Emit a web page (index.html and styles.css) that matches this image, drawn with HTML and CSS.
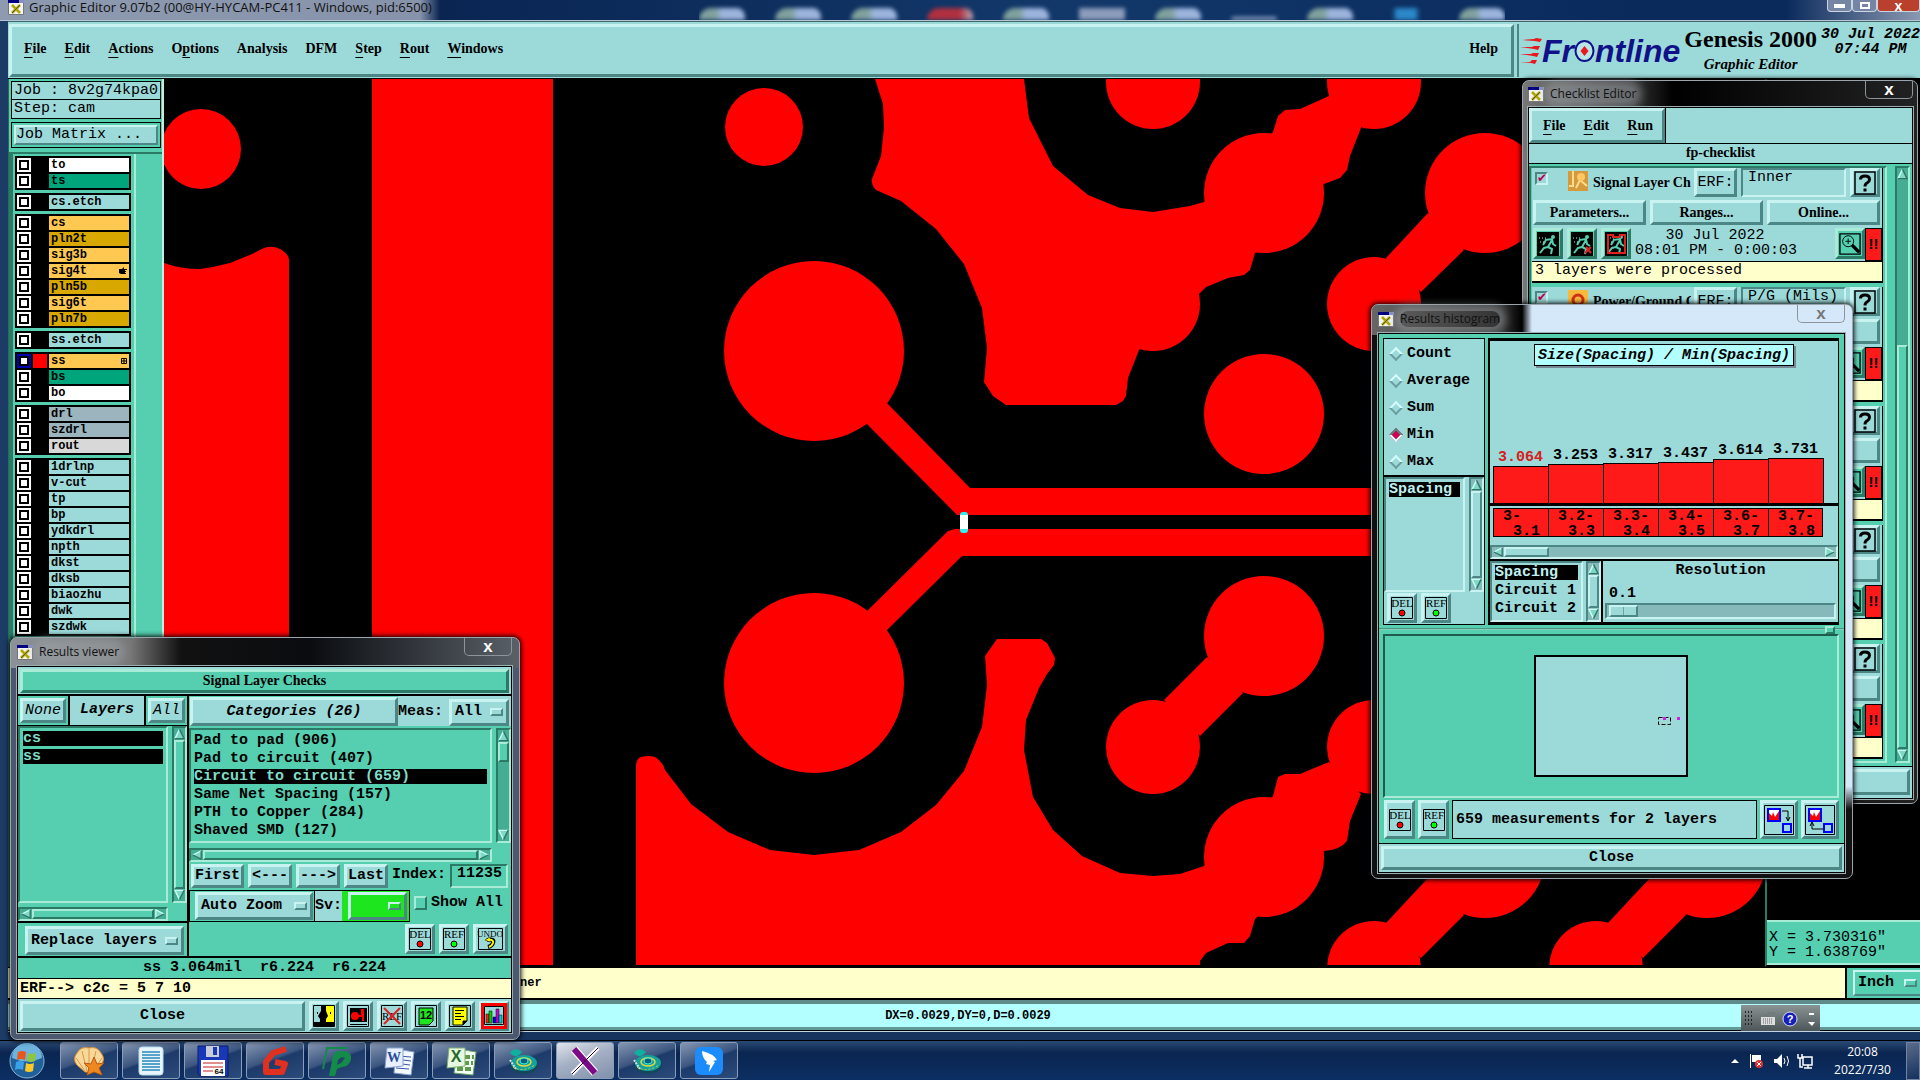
FILE: index.html
```html
<!DOCTYPE html>
<html lang="en">
<head>
    <meta charset="utf-8">
    <title>Graphic Editor</title>
    <link rel="stylesheet" href="styles.css">
</head>
<body>
<!-- shared icons -->
<svg class="defs" width="0" height="0">
    <symbol id="xwin" viewBox="0 0 16 15"><path fill="#f4f4f4" stroke="#777" d="M.5.5h15v14H.5z"/><path fill="#000080" d="M0 0h11v3H0z"/><path fill="#8890c0" d="M11 0h5v3h-5z"/><path stroke="#b0a800" stroke-width="2.5" d="M4 5l8 8M12 5l-8 8"/><path stroke="#5a5a20" d="M12 5l-8 8"/></symbol>
    <symbol id="up" viewBox="0 0 12 12"><path fill="#7fd8c6" d="M6 1l5 10H1z"/><path fill="none" stroke="#c9fff4" stroke-width="1.5" d="M6 1L1 11"/><path fill="none" stroke="#2f7466" stroke-width="1.5" d="M6 1l5 10H1"/></symbol>
    <symbol id="down" viewBox="0 0 12 12"><path fill="#7fd8c6" d="M6 11L1 1h10z"/><path fill="none" stroke="#c9fff4" stroke-width="1.5" d="M6 11L1 1h10"/><path fill="none" stroke="#2f7466" stroke-width="1.5" d="M11 1L6 11"/></symbol>
    <symbol id="left" viewBox="0 0 12 12"><path fill="#7fd8c6" d="M1 6l10-5v10z"/><path fill="none" stroke="#c9fff4" stroke-width="1.5" d="M1 6l10-5"/><path fill="none" stroke="#2f7466" stroke-width="1.5" d="M11 1v10L1 6"/></symbol>
    <symbol id="right" viewBox="0 0 12 12"><path fill="#7fd8c6" d="M11 6L1 1v10z"/><path fill="none" stroke="#c9fff4" stroke-width="1.5" d="M11 6L1 1v10"/><path fill="none" stroke="#2f7466" stroke-width="1.5" d="M1 11l10-5"/></symbol>
    <symbol id="del" viewBox="0 0 24 24"><path fill="none" stroke="#000" d="M1.500 1.500h21v21h-21z"/><text x="12" y="11" class="icon-text">DEL</text><circle cx="12" cy="17" r="3" fill="#f00" stroke="#000"/></symbol>
    <symbol id="ref" viewBox="0 0 24 24"><path fill="none" stroke="#000" d="M1.500 1.500h21v21h-21z"/><text x="12" y="11" class="icon-text">REF</text><circle cx="12" cy="17" r="3" fill="#0f0" stroke="#000"/></symbol>
    <symbol id="help" viewBox="0 0 22 24"><path fill="none" stroke="#000" stroke-width="1.500" d="M1 1h20v22H1z"/><path fill="none" stroke="#000" stroke-width="3" d="M6.500 8.500q0-3.500 4.500-3.500t4.500 3.500q0 2-2.500 3.500-2 1-2 3.500"/><path d="M9.500 17.500h3v3h-3z"/></symbol>
    <symbol id="run" viewBox="0 0 22 24"><path d="M0 0h22v24H0z"/><path fill="none" stroke="#55cfb0" stroke-width="2" d="M15 8l-4 7-4 1-4 5M11 15l4 2-1 5M8 8l7-1 1 5 3 2M9 8l-3 5"/><circle cx="16" cy="5" r="2" fill="#55cfb0"/><path stroke="#9ff" stroke-dasharray="1 2" d="M2 6h8M3 10h4"/></symbol>
    <symbol id="zoomin" viewBox="0 0 24 24"><path fill="#55cfb0" stroke="#000" stroke-width="1.500" d="M1 1h22v22H1z"/><circle cx="10" cy="9" r="6" fill="none" stroke="#000"/><path stroke="#000" d="M10 6v6M7 9h6"/><path stroke="#000" stroke-width="3.500" d="M14 13l8 8"/></symbol>
    <symbol id="cam" viewBox="0 0 32 30"><ellipse cx="17" cy="19" rx="14" ry="9" fill="#13475a"/><ellipse cx="17" cy="17" rx="13" ry="8" fill="#12a19b"/><ellipse cx="17" cy="16" rx="7" ry="4" fill="none" stroke="#e6d840" stroke-width="1.500"/><ellipse cx="17" cy="15" rx="4" ry="3" fill="#0b5b7c" stroke="#40f0e0"/><path fill="#10b0a0" d="M3 7q5-7 12-1l-3 3q-5 3-9-2z"/><path stroke="#ddd" stroke-width="2" stroke-dasharray="2 1" d="M3 14l6 9"/><path stroke="#d8d048" stroke-dasharray="2 2" d="M6 21q9 6 22-2" fill="none"/></symbol>
</svg>

<div class="screen">
    <header class="titlebar">
        <svg class="xicon"><use href="#xwin"/></svg>
        <span class="glow">Graphic Editor 9.07b2 (00@HY-HYCAM-PC411 - Windows, pid:6500)</span>
        <div class="desk"><i></i><i></i><i></i><i class="pdf"></i><i></i><i class="box"></i><i></i><i class="thin"></i><i></i><i class="blue"></i><i></i></div>
        <div class="win-buttons">
            <button aria-label="Minimize"><i class="min"></i></button>
            <button aria-label="Maximize"><i class="max"></i></button>
            <button aria-label="Close" class="red">x</button>
        </div>
    </header>

    <div class="app">
        <div class="topbar">
            <nav class="menu raised">
                <a href="#"><u>F</u>ile</a><a href="#"><u>E</u>dit</a><a href="#"><u>A</u>ctions</a><a href="#">O<u>p</u>tions</a><a href="#">Analysis</a><a href="#">DFM</a><a href="#"><u>S</u>tep</a><a href="#"><u>R</u>out</a><a href="#"><u>W</u>indows</a>
                <a href="#" class="help">Help</a>
            </nav>
            <div class="brand">
                <div class="logo">
                    <svg width="22" height="26" viewBox="0 0 22 26"><path fill="#e8181c" d="M2 2l12-1 2-1 6 1-2 3-5-1zM0 9l12 0 2-1 6 0-2 4-4-1zM0 16l11 0 2-1 6 0-2 4-4-1zM0 24l10 0 2-2 5 0-2 4-4-1z"/></svg>
                    <span>Fr</span><svg width="21" height="24" viewBox="0 0 21 24"><ellipse cx="10.500" cy="12" rx="9" ry="10" fill="#b8e6e6" stroke="#101088" stroke-width="2"/><path fill="#e8181c" d="M10.500 7l4 5-4 5-4-5z"/></svg><span>ntline</span>
                </div>
                <div class="product"><b>Genesis 2000</b><em>Graphic Editor</em></div>
                <div class="stamp">30 Jul 2022<br>07:44 PM</div>
            </div>
        </div>

        <div class="work">
            <aside class="sidebar">
                <div class="job">Job : 8v2g74kpa0</div>
                <div class="job">Step: cam</div>
                <div class="matrix"><button class="raised">Job Matrix ...</button></div>
                <div class="layer-area">
                    <div class="layers">
                        <div class="group">
                            <label class="white"><input type="checkbox"><i></i><span>to</span></label>
                            <label class="green"><input type="checkbox"><i></i><span>ts</span></label>
                        </div>
                        <div class="group">
                            <label><input type="checkbox"><i></i><span>cs.etch</span></label>
                        </div>
                        <div class="group">
                            <label class="orange"><input type="checkbox"><i></i><span>cs</span></label>
                            <label class="gold"><input type="checkbox"><i></i><span>pln2t</span></label>
                            <label class="orange"><input type="checkbox"><i></i><span>sig3b</span></label>
                            <label class="orange"><input type="checkbox"><i></i><span>sig4t<svg width="8" height="8" viewBox="0 0 8 8"><path d="M0 2h3l2-2v2h3v1H6v1h1v1H6v1h1v1H2L0 6z"/></svg></span></label>
                            <label class="gold"><input type="checkbox"><i></i><span>pln5b</span></label>
                            <label class="orange"><input type="checkbox"><i></i><span>sig6t</span></label>
                            <label class="gold"><input type="checkbox"><i></i><span>pln7b</span></label>
                        </div>
                        <div class="group">
                            <label><input type="checkbox"><i></i><span>ss.etch</span></label>
                        </div>
                        <div class="group">
                            <label class="orange active"><input type="checkbox" checked><i></i><span>ss<svg width="6" height="6" viewBox="0 0 6 6"><path fill="none" stroke="#000" d="M.5.5h5v5h-5zM3 0v6M0 3h6"/></svg></span></label>
                            <label class="green"><input type="checkbox"><i></i><span>bs</span></label>
                            <label class="white"><input type="checkbox"><i></i><span>bo</span></label>
                        </div>
                        <div class="group">
                            <label class="slate"><input type="checkbox"><i></i><span>drl</span></label>
                            <label class="slate"><input type="checkbox"><i></i><span>szdrl</span></label>
                            <label class="grey"><input type="checkbox"><i></i><span>rout</span></label>
                        </div>
                        <div class="group">
                            <label><input type="checkbox"><i></i><span>1drlnp</span></label>
                            <label><input type="checkbox"><i></i><span>v-cut</span></label>
                            <label><input type="checkbox"><i></i><span>tp</span></label>
                            <label><input type="checkbox"><i></i><span>bp</span></label>
                            <label><input type="checkbox"><i></i><span>ydkdrl</span></label>
                            <label><input type="checkbox"><i></i><span>npth</span></label>
                            <label><input type="checkbox"><i></i><span>dkst</span></label>
                            <label><input type="checkbox"><i></i><span>dksb</span></label>
                            <label><input type="checkbox"><i></i><span>biaozhu</span></label>
                            <label><input type="checkbox"><i></i><span>dwk</span></label>
                            <label><input type="checkbox"><i></i><span>szdwk</span></label>
                        </div>
                    </div>
                </div>
            </aside>

            <!-- copper artwork -->
            <svg class="board" viewBox="164 79 1601 888" preserveAspectRatio="xMinYMin slice" fill="#f00">
                <path d="M372 79h181v888H372z"/>
                <circle cx="201" cy="149" r="40"/>
                <path d="M164 263q17 6 36 6 15-2 30-6l22-9 12-6q8-3 16 1 9 5 9 11v707H164z"/>
                <circle cx="764" cy="127" r="39"/>
                <circle cx="814" cy="351" r="90"/>
                <circle cx="814" cy="683" r="90"/>
                <path d="M884 400l86 88h500v27H957l-98-99z"/>
                <path d="M1470 529H955l-7 2-88 87 20 19 82-81h508z"/>
                <path d="M875 79l8 25 1 24-3 28-9 23q-1 6 4 11l25 11 35 28 28 35 18 44 5 40-3 34 9 14 13 9h110l7-4 3-5 2-18 11-28 61-57 6-6 22-9 16-3 6-5 5-17 69-69 16-6 7-8 3-14 11-28V79h-32v17l-29 13-15 1-7 6-5 16-69 70-14 4-37 6-33-4-32-13-35-29-24-48-5-39z"/>
                <circle cx="1153" cy="304" r="47"/><circle cx="1264" cy="193" r="60"/><circle cx="1374" cy="82" r="47"/>
                <circle cx="1153" cy="82" r="47"/>
                <circle cx="1264" cy="414" r="60"/>
                <circle cx="1374" cy="304" r="47"/><circle cx="1485" cy="193" r="60"/><path d="M1386 258l42-45 36 37-43 42z"/>
                <circle cx="1264" cy="636" r="60"/><circle cx="1153" cy="747" r="47"/><path d="M1164 700l43-43 36 36-43 43z"/>
                <path d="M636 967V765q1-7 5-8 8-2 14 0 8 5 10 13l26 34 37 28 42 18 44 5 45-5 42-18 35-27 28-34 18-44 5-42-2-29 12-17h44l6 4 8 15-1 7-7 9-8 14-13 32-2 30 9 47 20 33 29 26 38 17 33 3 27-2 24-8 69-70 5-19 7-3h15l29-12 32 32-11 27-3 20q-7 9-23 10l-69 68-5 17-6 7h-16l-22 10-6 8v7z"/>
                <circle cx="1374" cy="747" r="47"/><circle cx="1264" cy="857" r="60"/>
                <circle cx="1374" cy="968" r="47"/><circle cx="1485" cy="858" r="60"/><path d="M1386 923l42-45 36 37-43 43z"/>
                <circle cx="1596" cy="968" r="47"/><circle cx="1707" cy="858" r="60"/><path d="M1608 923l42-45 36 37-43 43z"/>
                <rect x="960" y="512" width="8" height="21" rx="3" fill="#2df0f5"/>
                <path fill="#fff" d="M960 515h8v14h-8z"/>
                <path fill="#000" d="M164 965h1601v3H164z"/>
            </svg>

            <div class="coords"><div>X = 3.730316"<br>Y = 1.638769"</div></div>
        </div>

        <div class="prompt"><div class="line">ner</div><button class="inch raised option">Inch<i></i></button></div>
        <div class="status">DX=0.0029,DY=0,D=0.0029
            <div class="langbar">
                <svg width="79" height="26" viewBox="0 0 79 26"><path stroke="#222" stroke-width="2" stroke-dasharray="1 2" d="M4 7h9M4 11h9M4 15h9M4 19h9"/><path fill="#ddd" d="M20 12h14v8H20z"/><path stroke="#666" stroke-dasharray="1 1" d="M22 14h10M22 16h10M22 18h10M24 11l3-3h7" fill="none"/><circle cx="49" cy="14" r="7" fill="#1420b8" stroke="#dde" /><text x="49" y="18" class="qmark">?</text><path fill="#fff" d="M68 8h5v2h-5zM67 17h7l-3 4z"/></svg>
            </div>
        </div>
    </div>

    <footer class="taskbar">
        <button class="orb" aria-label="Start"><svg width="38" height="36" viewBox="0 0 38 36"><circle cx="19" cy="18" r="17" fill="#1f5f9a" stroke="#8fb4d0"/><path fill="#6db3dd" d="M4 15a15 15 0 0 1 30 0q-15 7-30 0z"/><path fill="#e8581c" d="M10 9q4-2 8 0l-1 8q-4-2-8 0z"/><path fill="#8cc63c" d="M20 10q4 2 8 0l-1 8q-4 2-8 0z"/><path fill="#3aa0e8" d="M8 19q4-2 8 0l-1 8q-4-2-8 0z"/><path fill="#fcc828" d="M18 20q4 2 8 0l-1 8q-4 2-8 0z"/></svg></button>
        <button class="task" aria-label="Shell"><svg width="34" height="30" viewBox="0 0 34 30"><path fill="#f8d898" stroke="#d89030" d="M17 2q8-2 12 5 5 6 0 12l-8 7h-8l-8-7q-5-6 0-12 4-7 12-5z"/><path stroke="#d89848" d="M17 3v22M10 5l5 20M24 5l-5 20M4 12l9 13M30 12l-9 13"/><path fill="#f08820" stroke="#b85a10" d="M22 11l3 7 7-1-5 5 3 7-8-3-7 3 2-7-5-5 7 1z"/></svg></button>
        <button class="task" aria-label="Notepad"><svg width="26" height="30" viewBox="0 0 26 30"><rect x="1" y="1" width="24" height="28" rx="3" fill="#e8f6fc" stroke="#b8dcec"/><path stroke="#2888b8" stroke-width="1.500" d="M4 6h18M4 9h18M4 12h18M4 15h18M4 18h18M4 21h18M4 24h18"/></svg></button>
        <button class="task" aria-label="Floppy"><svg width="32" height="32" viewBox="0 0 32 32"><path fill="#1838b8" stroke="#0a1c70" d="M1 1h30v30H3l-2-2z"/><path fill="#c8ccd8" d="M9 1h13v11H9z"/><path fill="#1838b8" d="M16 2h4v8h-4z"/><path fill="#fff" d="M4 15h24v16H4z"/><path stroke="#c02020" d="M6 18h20M6 22h20M6 26h10"/><text x="22" y="29" class="tiny">64</text></svg></button>
        <button class="task" aria-label="Genesis"><svg width="30" height="32" viewBox="0 0 30 32"><path fill="none" stroke="#e03020" stroke-width="6" stroke-linejoin="round" d="M26 4L13 8 6 17v10h16l3-8-10-2"/></svg></button>
        <button class="task" aria-label="P tool"><svg width="32" height="32" viewBox="0 0 32 32"><path fill="none" stroke="#128c48" stroke-width="2" d="M2 24L6 3h21"/><path fill="#128c48" d="M8 31l4-20q1-5 7-5h4q8 1 7 8t-9 8l-5 2-2 7z"/><path fill="#24406c" d="M17 15q3-4 7-2l-4 5-4 2z"/></svg></button>
        <button class="task" aria-label="Word"><svg width="32" height="30" viewBox="0 0 32 30"><path fill="#f4f8ff" stroke="#8aa4d0" d="M13 3l18 3-3 23-17-2z"/><path stroke="#3858a8" d="M15 10l13 1M20 14l8 1M19 18l8 1M13 22l13 1"/><path fill="#e8f0ff" stroke="#8aa4d0" d="M4 2h16v18L2 22z"/><text x="11" y="16" class="office word">W</text></svg></button>
        <button class="task" aria-label="Excel"><svg width="32" height="30" viewBox="0 0 32 30"><path fill="#f4fff4" stroke="#70a870" d="M13 3l18 3-3 23-19-2z"/><path stroke="#5c9c48" stroke-width="4" stroke-dasharray="6 2" d="M19 11h10M18 17h10M12 23h16"/><path fill="#e8f8e0" stroke="#80b070" d="M4 2h16v18L2 22z"/><text x="11" y="16" class="office excel">X</text></svg></button>
        <button class="task" aria-label="InCAM"><svg width="34" height="30"><use href="#cam"/></svg></button>
        <button class="task current" aria-label="X server"><svg width="32" height="30" viewBox="0 0 32 30"><path stroke="#fff" stroke-width="8" d="M5 3l21 24"/><path stroke="#fff" stroke-width="4" d="M29 2L3 28"/><path stroke="#7b0a86" stroke-width="6" d="M5 3l21 24"/><path stroke="#300838" d="M29 2L3 28"/></svg></button>
        <button class="task" aria-label="Genesis 2000"><svg width="34" height="30"><use href="#cam"/></svg></button>
        <button class="task" aria-label="DingTalk"><svg width="28" height="28" viewBox="0 0 28 28"><rect width="28" height="28" rx="6" fill="#1c8cfc"/><path fill="#fff" d="M7 4q12 3 15 9l-4 1 2 1-6 10 1-7-4-1 1-2q-5-4-5-11z"/></svg></button>
        <div class="tray">
            <svg width="84" height="20" viewBox="0 0 84 20"><path fill="#fff" d="M0 12l4-4 4 4z"/><path fill="#fff" d="M19 3h1v14h-1zM21 4h9v7h-9z"/><circle cx="28" cy="13" r="4" fill="#e03030"/><path stroke="#fff" d="M26 11l4 4M30 11l-4 4"/><path fill="#fff" d="M43 8h3l5-5v14l-5-5h-3z"/><path fill="none" stroke="#fff" d="M53 7q2 3 0 6M56 5q3 5 0 10"/><path fill="none" stroke="#fff" stroke-width="1.500" d="M72 6h9v8h-9zM73 17h8M77 14v3M67 3v4h4V3M69 7v9h3"/></svg>
            <div class="clock">20:08<br>2022/7/30</div>
            <button class="peek" aria-label="Show desktop"></button>
        </div>
    </footer>

    <!-- checklist editor -->
    <section class="window checklist">
        <div class="caption"><svg class="xicon"><use href="#xwin"/></svg><span class="glow">Checklist Editor</span><button class="close" aria-label="Close">x</button></div>
        <div class="pane">
            <div class="ck-menu"><nav class="raised"><a href="#"><u>F</u>ile</a><a href="#"><u>E</u>dit</a><a href="#"><u>R</u>un</a></nav></div>
            <div class="ck-name">fp-checklist</div>
            <div class="ck-body">
                <div class="ck-items">
                    <article class="check">
                        <div class="r1"><input type="checkbox" checked aria-label="Enable"><svg width="20" height="20" viewBox="0 0 20 20"><path fill="#d49a3c" d="M0 0h20v20H0z"/><path fill="none" stroke="#ffdc8c" stroke-width="2" d="M5 0v15H1M8 17l4-8 7 6"/><circle cx="13" cy="6" r="4" fill="#ffc864"/></svg><b>Signal Layer Ch</b><button class="raised">ERF:</button><input type="text" value="Inner" aria-label="ERF"><button class="raised" aria-label="Help"><svg width="22" height="24"><use href="#help"/></svg></button></div>
                        <div class="r2"><button class="raised">Parameters...</button><button class="raised">Ranges...</button><button class="raised">Online...</button></div>
                        <div class="r3"><button class="raised teal" aria-label="Run"><svg width="22" height="24"><use href="#run"/></svg></button><button class="raised teal" aria-label="Run area"><svg width="22" height="24"><use href="#run"/><path stroke="#e02020" stroke-width="2" d="M14 21l6-6M15 15l5 6"/></svg></button><button class="raised teal" aria-label="Run profile"><svg width="22" height="24"><use href="#run"/><path fill="none" stroke="#e02020" stroke-width="2" d="M3 3h5v2h7V3h5v18H3z"/></svg></button><p>30 Jul 2022<br>08:01 PM - 0:00:03</p><button class="raised teal" aria-label="Results"><svg width="22" height="24"><use href="#zoomin"/></svg></button><strong>!!</strong></div>
                        <div class="r4">3 layers were processed</div>
                    </article>
                    <article class="check">
                        <div class="r1"><input type="checkbox" checked aria-label="Enable"><svg width="20" height="20" viewBox="0 0 20 20"><path fill="#f8b83c" d="M0 0h20v20H0z"/><circle cx="10" cy="10" r="5" fill="none" stroke="#d03018" stroke-width="3"/></svg><b>Power/Ground C</b><button class="raised">ERF:</button><input type="text" value="P/G (Mils)" aria-label="ERF"><button class="raised" aria-label="Help"><svg width="22" height="24"><use href="#help"/></svg></button></div>
                        <div class="r2"><button class="raised"></button><button class="raised"></button><button class="raised"></button></div>
                        <div class="r3"><p></p><button class="raised teal" aria-label="Results"><svg width="22" height="24"><use href="#zoomin"/></svg></button><strong>!!</strong></div>
                        <div class="r4"></div>
                    </article>
                    <article class="check">
                        <div class="r1"><b></b><button class="raised" aria-label="Help"><svg width="22" height="24"><use href="#help"/></svg></button></div>
                        <div class="r2"><button class="raised"></button><button class="raised"></button><button class="raised"></button></div>
                        <div class="r3"><p></p><button class="raised teal" aria-label="Results"><svg width="22" height="24"><use href="#zoomin"/></svg></button><strong>!!</strong></div>
                        <div class="r4"></div>
                    </article>
                    <article class="check">
                        <div class="r1"><b></b><button class="raised" aria-label="Help"><svg width="22" height="24"><use href="#help"/></svg></button></div>
                        <div class="r2"><button class="raised"></button><button class="raised"></button><button class="raised"></button></div>
                        <div class="r3"><p></p><button class="raised teal" aria-label="Results"><svg width="22" height="24"><use href="#zoomin"/></svg></button><strong>!!</strong></div>
                        <div class="r4"></div>
                    </article>
                    <article class="check">
                        <div class="r1"><b></b><button class="raised" aria-label="Help"><svg width="22" height="24"><use href="#help"/></svg></button></div>
                        <div class="r2"><button class="raised"></button><button class="raised"></button><button class="raised"></button></div>
                        <div class="r3"><p></p><button class="raised teal" aria-label="Results"><svg width="22" height="24"><use href="#zoomin"/></svg></button><strong>!!</strong></div>
                        <div class="r4"></div>
                    </article>
                </div>
                <div class="vbar teal"><svg><use href="#up"/></svg><div class="track"><i class="thumb low"></i></div><svg><use href="#down"/></svg></div>
            </div>
            <div class="ck-close"><button class="raised"></button></div>
        </div>
    </section>

    <!-- results histogram -->
    <section class="window histogram">
        <div class="caption"><svg class="xicon"><use href="#xwin"/></svg><span class="glow">Results histogram</span><button class="close" aria-label="Close">x</button></div>
        <div class="pane">
            <div class="hg-top">
                <div class="hg-left">
                    <div class="radios">
                        <label><input type="radio" name="stat">Count</label>
                        <label><input type="radio" name="stat">Average</label>
                        <label><input type="radio" name="stat">Sum</label>
                        <label><input type="radio" name="stat" checked>Min</label>
                        <label><input type="radio" name="stat">Max</label>
                    </div>
                    <div class="list-row">
                        <ul class="list"><li class="sel">Spacing</li></ul>
                        <div class="vbar"><svg><use href="#up"/></svg><div class="track"><i class="thumb"></i></div><svg><use href="#down"/></svg></div>
                    </div>
                    <div class="tools"><button class="raised" aria-label="Delete"><svg width="24" height="24"><use href="#del"/></svg></button><button class="raised" aria-label="Reference"><svg width="24" height="24"><use href="#ref"/></svg></button></div>
                </div>
                <div class="hg-right">
                    <div class="chart">
                        <div class="chart-title">Size(Spacing) / Min(Spacing)</div>
                        <div class="bars">
                            <div class="hot"><span>3.064</span><i style="height:37px"></i></div>
                            <div><span>3.253</span><i style="height:39px"></i></div>
                            <div><span>3.317</span><i style="height:40px"></i></div>
                            <div><span>3.437</span><i style="height:41px"></i></div>
                            <div><span>3.614</span><i style="height:44px"></i></div>
                            <div><span>3.731</span><i style="height:45px"></i></div>
                        </div>
                        <div class="bins">
                            <div>3-<span>3.1</span></div><div>3.2-<span>3.3</span></div><div>3.3-<span>3.4</span></div><div>3.4-<span>3.5</span></div><div>3.6-<span>3.7</span></div><div>3.7-<span>3.8</span></div>
                        </div>
                    </div>
                    <div class="hbar"><svg><use href="#left"/></svg><div class="track"><i class="thumb short"></i></div><svg><use href="#right"/></svg></div>
                    <div class="hg-res">
                        <ul class="list"><li class="sel">Spacing</li><li>Circuit 1</li><li>Circuit 2</li></ul>
                        <div class="vbar"><svg><use href="#up"/></svg><div class="track"><i class="thumb"></i></div><svg><use href="#down"/></svg></div>
                        <div class="resolution"><label for="res">Resolution</label><output>0.1</output><input id="res" type="range" min="0" max="100" value="1"></div>
                    </div>
                </div>
            </div>
            <div class="splitter"><i></i></div>
            <div class="map">
                <svg width="154" height="122" viewBox="0 0 154 122"><path fill="#9cdada" stroke="#000" stroke-width="2" d="M1 1h152v120H1z"/><path fill="none" stroke="#000" stroke-dasharray="4 2" d="M124.500 62.500h12v7h-12z"/><path fill="#d020e0" d="M129 62h3v3h-3zM143 62h3v3h-3z"/></svg>
            </div>
            <div class="hg-foot">
                <button class="raised" aria-label="Delete"><svg width="24" height="24"><use href="#del"/></svg></button>
                <button class="raised" aria-label="Reference"><svg width="24" height="24"><use href="#ref"/></svg></button>
                <div class="message">659 measurements for 2 layers</div>
                <button class="raised big" aria-label="Next"><svg width="30" height="30" viewBox="0 0 30 30"><path fill="none" stroke="#000" d="M.5.5h29v29H.5z"/><path fill="#fff" stroke="#00f" stroke-width="2" d="M4 4h12v12H4z"/><path fill="#f00" d="M5 15V8l3 3 1-4 2 5 4-6v9z"/><path fill="none" stroke="#00f" stroke-width="2" d="M19 19h8v8h-8z"/><path fill="none" stroke="#000" d="M18 6h6v9M22 12l2 4 2-4"/></svg></button>
                <button class="raised big" aria-label="Previous"><svg width="30" height="30" viewBox="0 0 30 30"><path fill="none" stroke="#000" d="M.5.5h29v29H.5z"/><path fill="#fff" stroke="#00f" stroke-width="2" d="M4 4h12v12H4z"/><path fill="#f00" d="M5 15V8l3 3 1-4 2 5 4-6v9z"/><path fill="none" stroke="#00f" stroke-width="2" d="M19 19h8v8h-8z"/><path fill="none" stroke="#000" d="M18 24H7v-6M5 21l2-4 2 4"/></svg></button>
            </div>
            <div class="hg-close"><button class="raised">Close</button></div>
        </div>
    </section>

    <!-- results viewer -->
    <section class="window viewer">
        <div class="caption"><svg class="xicon"><use href="#xwin"/></svg><span class="glow">Results viewer</span><button class="close" aria-label="Close">x</button></div>
        <div class="pane">
            <div class="rv-head"><div class="raised teal">Signal Layer Checks</div></div>
            <div class="rv-cols">
                <div class="rv-left">
                    <div class="tabs"><button class="raised">None</button><b>Layers</b><button class="raised">All</button></div>
                    <div class="list-row">
                        <ul class="list"><li class="sel">cs</li><li class="sel">ss</li></ul>
                        <div class="vbar teal"><svg><use href="#up"/></svg><div class="track"><i class="thumb"></i></div><svg><use href="#down"/></svg></div>
                    </div>
                    <div class="hbar teal"><svg><use href="#left"/></svg><div class="track"><i class="thumb"></i></div><svg><use href="#right"/></svg></div>
                    <div class="replace"><button class="raised option">Replace layers<i></i></button></div>
                </div>
                <div class="rv-right">
                    <div class="cats"><button class="raised">Categories (26)</button><div><span>Meas:</span><button class="raised option">All<i></i></button></div></div>
                    <div class="list-row">
                        <ul class="list"><li>Pad to pad (906)</li><li>Pad to circuit (407)</li><li class="sel">Circuit to circuit (659)</li><li>Same Net Spacing (157)</li><li>PTH to Copper (284)</li><li>Shaved SMD (127)</li></ul>
                        <div class="vbar teal"><svg><use href="#up"/></svg><div class="track"><i class="thumb mini"></i></div><svg><use href="#down"/></svg></div>
                    </div>
                    <div class="hbar teal"><svg><use href="#left"/></svg><div class="track"><i class="thumb"></i></div><svg><use href="#right"/></svg></div>
                    <div class="nav"><button class="raised">First</button><button class="raised">&lt;---</button><button class="raised">---&gt;</button><button class="raised">Last</button><label for="idx">Index:</label><input type="text" id="idx" value="11235"></div>
                    <div class="zoomrow">
                        <div class="zoombox"><button class="raised option">Auto Zoom<i></i></button><span>Sv:</span><div><button class="raised option lime" aria-label="Severity"><i></i></button></div></div>
                        <label><input type="checkbox">Show All</label>
                    </div>
                    <div class="tools">
                        <button class="raised" aria-label="Delete"><svg width="24" height="24"><use href="#del"/></svg></button>
                        <button class="raised" aria-label="Reference"><svg width="24" height="24"><use href="#ref"/></svg></button>
                        <button class="raised" aria-label="Undo"><svg width="29" height="24" viewBox="0 0 29 24"><path fill="none" stroke="#000" d="M2.500 1.500h24v21h-24z"/><text x="14" y="10" class="icon-text undo">UNDO</text><path fill="none" stroke="#000" stroke-width="4" d="M11 13q8-2 6 3-1 3-5 4"/><path fill="#ff0" stroke="#000" stroke-width="0.500" d="M9 13l5-3v5z"/><path fill="none" stroke="#ff0" stroke-width="2" d="M12 13q6-1 5 3-1 3-4 4"/></svg></button>
                    </div>
                </div>
            </div>
            <div class="rv-info">ss 3.064mil&nbsp; r6.224&nbsp; r6.224</div>
            <div class="rv-erf">ERF--&gt; c2c = 5 7 10</div>
            <div class="rv-foot">
                <button class="raised wide">Close</button>
                <button class="raised" aria-label="Compare"><svg width="24" height="24" viewBox="0 0 24 24"><path fill="#9cdada" stroke="#000" d="M1.500 1.500h21v21h-21z"/><path fill="#ff0" d="M12 2h10v20H12z"/><path d="M9 2h5v5l2 5-2 3v3h8v4H2v-4h6v-3l-2-3 3-5zM5 8h1v2H5zM18 8h1v2h-1z"/></svg></button>
                <button class="raised" aria-label="Snapshot"><svg width="24" height="24" viewBox="0 0 24 24"><path fill="#9cdada" stroke="#000" d="M1.500 1.500h21v21h-21z"/><path d="M4 4h17v14H4z"/><circle cx="9" cy="12" r="4" fill="#f00"/><path fill="none" stroke="#f00" stroke-width="2" d="M12 12h4V5M17 5v12"/><path stroke="#000" d="M4 20.500h17"/></svg></button>
                <button class="raised" aria-label="Clear reference"><svg width="24" height="24" viewBox="0 0 24 24"><path fill="none" stroke="#000" d="M1.500 1.500h21v21h-21z"/><text x="12" y="16" class="icon-text">REF</text><path stroke="#e02020" stroke-width="2" d="M4 4l16 16M20 4L4 20"/></svg></button>
                <button class="raised" aria-label="Numbers"><svg width="24" height="24" viewBox="0 0 24 24"><path fill="none" stroke="#000" d="M1.500 1.500h21v21h-21z"/><path fill="#1ee61e" stroke="#000" d="M5 4h14v13l-4 4H5z"/><text x="12" y="15" class="num">12</text></svg></button>
                <button class="raised" aria-label="Notes"><svg width="24" height="24" viewBox="0 0 24 24"><path fill="none" stroke="#000" d="M1.500 1.500h21v21h-21z"/><path fill="#ff0" stroke="#000" d="M5 3h14v14l-4 4H5z"/><path stroke="#000" d="M7 6.500h9M7 9.500h6M7 12.500h9M7 15.500h6M15 21v-4h4"/></svg></button>
                <button class="raised" aria-label="Histogram"><svg width="26" height="26" viewBox="0 0 26 26"><path fill="#9cdada" stroke="#f00" stroke-width="3" d="M1.500 1.500h23v23h-23z"/><path fill="none" stroke="#000" d="M3.500 3.500h19v18h-19z"/><path fill="#e22" stroke="#000" stroke-width="0.500" d="M5 11h3v9H5z"/><path fill="#0c0" stroke="#000" stroke-width="0.500" d="M8 8h3v12H8z"/><path fill="#00f" stroke="#000" stroke-width="0.500" d="M12 14h3v6h-3z"/><path fill="#c0c" stroke="#000" stroke-width="0.500" d="M15 6h3v14h-3z"/><path fill="#0cc" stroke="#000" stroke-width="0.500" d="M18 12h3v8h-3z"/></svg></button>
            </div>
        </div>
    </section>
</div>
</body>
</html>
```

FILE: styles.css
```css
* {
    box-sizing: border-box;
}
body {
    margin: 0;
    font: bold 15px/18px "Liberation Mono", monospace;
    color: #000;
    white-space: nowrap;
    background: #0a2a5a;
}
button, input {
    font: inherit;
    color: inherit;
    margin: 0;
    padding: 0;
}
button {
    display: flex;
    align-items: center;
    justify-content: center;
    background: #9cdada;
    border: 0;
}
a {
    color: inherit;
    text-decoration: none;
}
u {
    text-underline-offset: 4px;
}
ul {
    margin: 0;
    padding: 0;
    list-style: none;
}
p {
    margin: 0;
}
svg {
    display: block;
    flex: none;
}
.defs {
    position: absolute;
}
.icon-text {
    font: 11px "Liberation Serif", serif;
    text-anchor: middle;
    fill: #000;
}
.icon-text.undo {
    font-size: 9px;
}
.num {
    font: bold 11px "Liberation Sans", sans-serif;
    text-anchor: middle;
}

.raised {
    background: #9cdada;
    border: 3px solid;
    border-color: #c9f3f0 #4d8785 #4d8785 #c9f3f0;
}
.raised.teal {
    background: #55cfb0;
    border-color: #a8ecd8 #2a7a66 #2a7a66 #a8ecd8;
}
.option {
    gap: 4px;
    justify-content: space-between;
    padding: 0 3px;
}
.option i {
    flex: none;
    width: 13px;
    height: 8px;
    border: 2px solid;
    border-color: #c9f3f0 #4d8785 #4d8785 #c9f3f0;
}
.lime, .zoombox .lime {
    background: #1ee61e;
}

/* main window */
.screen {
    position: relative;
    height: 100vh;
    overflow: hidden;
    display: flex;
    flex-direction: column;
}
.titlebar {
    height: 21px;
    flex: none;
    display: flex;
    align-items: flex-start;
    padding: 0 0 0 8px;
    gap: 5px;
    font: 13px/14px "Open Sans", sans-serif;
    background: linear-gradient(90deg, #8d9ab0, #8793aa 420px, #0a2552 440px, #12386a 55%, #0a2a5c 85%, #0a2a5c 93%, #8a98b0);
    border-bottom: 1px solid #b8c4d4;
}
.xicon {
    width: 16px;
    height: 15px;
}
.glow {
    color: #111;
}
.titlebar .glow {
    width: 665px;
}
/* desktop icons seen through the glass */
.desk {
    display: flex;
    align-items: flex-end;
    gap: 30px;
    height: 20px;
    overflow: hidden;
}
.desk i {
    width: 46px;
    height: 12px;
    border-radius: 20px 14px 0 0;
    background: linear-gradient(90deg, #7fa09c 35%, #9cb4dc 50%);
    filter: blur(2px);
}
.desk .pdf {
    background: linear-gradient(90deg, #b03040 70%, #b8a8b4);
}
.desk .box {
    border-radius: 0;
    background: #8c9cba;
}
.desk .thin {
    height: 3px;
    background: #9cb0d0;
}
.desk .blue {
    background: linear-gradient(90deg, transparent 20%, #2c88c8 30%, #2c88c8 70%, transparent 80%);
}
.win-buttons {
    margin-left: auto;
    display: flex;
    width: 93px;
    height: 12px;
}
.win-buttons button {
    flex: 1;
    background: #7486a4;
    border: 1px solid #ccd4e0;
    border-top: 0;
    border-radius: 0 0 4px 4px;
    color: #fff;
    font: bold 14px/8px "Liberation Sans", sans-serif;
}
.win-buttons .red {
    flex: 1 0 20px;
    background: #b8402c;
}
.win-buttons .min {
    width: 11px;
    height: 4px;
    background: #fff;
}
.win-buttons .max {
    width: 10px;
    height: 7px;
    border: 2px solid #fff;
}
.app {
    flex: 1;
    min-height: 0;
    display: flex;
    flex-direction: column;
    border-left: 8px solid #1c3c66;
}
.topbar {
    flex: none;
    height: 58px;
    display: flex;
    gap: 3px;
    padding: 2px 0 1px 1px;
    background: #9cdada;
    border-top: 1px solid #3e6a6c;
    border-bottom: 1px solid #000;
    font: bold 15px/18px "Liberation Serif", serif;
}
.menu {
    flex: 1;
    display: flex;
    align-items: center;
    gap: 18px;
    padding: 0 13px 3px 12px;
    font-size: 14px;
}
.menu .help {
    margin-left: auto;
}
.brand {
    width: 403px;
    display: flex;
    gap: 4px;
    overflow: hidden;
    padding-left: 1px;
    border-left: 2px solid #4d8785;
}
.logo {
    display: flex;
    align-items: center;
    font: italic bold 32px/40px "Liberation Sans", sans-serif;
    color: #101088;
}
.product {
    display: flex;
    flex-direction: column;
    align-items: center;
}
.product b {
    font-size: 24px;
    line-height: 30px;
}
.product em {
    line-height: 20px;
}
.stamp {
    font: italic bold 15px/15px "Liberation Mono", monospace;
    padding-top: 3px;
    text-align: center;
}

.work {
    flex: 1;
    min-height: 0;
    display: flex;
    background: #000;
}
.sidebar {
    width: 156px;
    flex: none;
    background: #55cfb0;
    border-left: 1px solid #2a6a5c;
    border-right: 2px solid #bfeee4;
    display: flex;
    flex-direction: column;
    padding-top: 2px;
    font-weight: normal;
}
.job {
    margin: 0 1px 0 2px;
    height: 19px;
    padding-left: 2px;
    line-height: 18px;
    background: #9cdada;
    border: 1px solid #000;
}
.job + .job {
    border-top: 0;
}
.matrix {
    margin: 3px 1px 4px 2px;
    padding: 2px;
    height: 26px;
    border: 1px solid #000;
}
.matrix button {
    width: 100%;
    height: 20px;
    justify-content: flex-start;
    border-width: 2px;
}
.layer-area {
    flex: 1;
    min-height: 0;
    overflow: hidden;
    border-top: 2px solid #2a7a66;
}
.layers {
    width: 127px;
    height: 100%;
    padding: 2px 3px 0 2px;
    border-left: 4px solid #2a7a66;
    border-right: 2px solid #a8ecd8;
    display: flex;
    flex-direction: column;
    gap: 3px;
}
.group {
    flex: none;
    background: #000;
    padding: 2px;
    display: grid;
    gap: 2px;
    font: bold 12px/14px "Liberation Mono", monospace;
}
.group label {
    display: grid;
    grid-template-columns: 14px 14px 1fr;
    gap: 2px;
    height: 14px;
}
.group input {
    appearance: none;
    width: 14px;
    height: 14px;
    background: #fff;
    border: 2px solid #fff;
    box-shadow: inset 0 0 0 2px #000;
}
.group .active input {
    border-color: #0000b0;
}
.group .active i {
    background: #f00;
}
.group span {
    background: #9cdada;
    padding: 0 2px;
    display: flex;
    align-items: center;
    justify-content: space-between;
}
.group .white span {
    background: #fff;
}
.group .green span {
    background: #00a57c;
}
.group .orange span {
    background: #ffc850;
}
.group .gold span {
    background: #d8a800;
}
.group .slate span {
    background: #9cb4be;
}
.group .grey span {
    background: #d8d8d8;
}
.board {
    flex: 1;
    min-width: 0;
    height: 100%;
}
.coords {
    width: 155px;
    border-left: 2px solid #2a7a66;
    border-bottom: 2px solid #000;
    display: flex;
    flex-direction: column;
    justify-content: flex-end;
    font: 15px/15px "Liberation Mono", monospace;
}
.coords div {
    height: 45px;
    padding: 8px 2px 0;
    background: #55cfb0;
    border: solid #a8ecd8;
    border-width: 2px 0;
}
.prompt {
    height: 33px;
    flex: none;
    display: flex;
    background: #55cfb0;
    border-top: 1px solid #000;
    border-bottom: 2px solid #000;
}
.prompt .line {
    flex: 1;
    background: #ffffcc;
    border-right: 2px solid #000;
    padding-left: 512px;
    font-size: 12px;
    line-height: 31px;
}
.inch {
    width: 67px;
    margin: 2px 0 2px 6px;
}
.raised.inch {
    background: #55cfb0;
    border-width: 2px 0 2px 2px;
}
.status {
    position: relative;
    flex: none;
    height: 40px;
    padding-left: 8px;
    text-align: center;
    font-size: 12px;
    line-height: 24px;
    background: #b3ffff;
    border-top: 4px solid #5f8c8a;
    box-shadow: inset 0 -8px #17345f, inset 0 -9px #c0d4e4, inset 0 -10px #000, inset 0 -13px #5f9a98;
}
.langbar {
    position: absolute;
    right: 100px;
    top: 1px;
    width: 79px;
    height: 26px;
    background: linear-gradient(#8a9494, #4c5658);
}
.qmark {
    font: bold 11px "Liberation Sans", sans-serif;
    fill: #fff;
    text-anchor: middle;
}

.taskbar {
    flex: none;
    height: 40px;
    display: flex;
    gap: 4px;
    padding: 1px 0 1px 8px;
    background: linear-gradient(#2a4a74, #0a2550 30%, #0c2f63);
    border-top: 1px solid #000;
}
.orb {
    background: none;
    width: 38px;
    margin-right: 10px;
}
.task {
    width: 58px;
    border: 1px solid #8a9cb8;
    border-radius: 3px;
    background: linear-gradient(160deg, #8496b2, #3c5680 45%, #1c3a6a 50%, #2c4c7c);
}
.task.current {
    background: linear-gradient(160deg, #dfe4ec, #a4b0c4 45%, #8090ac);
}
.tiny {
    font: bold 8px "Liberation Sans", sans-serif;
    text-anchor: middle;
}
.office {
    font: bold 14px "Liberation Serif", serif;
    text-anchor: middle;
}
.word {
    fill: #2a4c9c;
}
.excel {
    font: bold 16px "Liberation Sans", sans-serif;
    fill: #1e6c28;
}
.tray {
    margin-left: auto;
    display: flex;
    align-items: center;
    gap: 9px;
    color: #fff;
    text-align: center;
    font: 12px/18px "Open Sans", sans-serif;
}
.clock {
    width: 69px;
    margin-left: 4px;
}
.peek {
    width: 14px;
    height: 38px;
    border: 1px solid #7484a0;
    background: linear-gradient(160deg, #5a6c8c, #14305c);
}

/* floating windows */
.window {
    position: absolute;
    display: flex;
    flex-direction: column;
    padding: 0 7px 6px 6px;
    border: 1px solid #9aa4ac;
    border-radius: 7px;
    box-shadow: 0 0 5px 1px #000;
}
.caption {
    height: 28px;
    flex: none;
    display: flex;
    align-items: center;
    gap: 6px;
    font: 12px/16px "Open Sans", sans-serif;
}
.caption .glow {
    border-radius: 8px;
    background: rgba(160, 165, 170, 0.5);
    box-shadow: 0 0 8px 6px rgba(160, 165, 170, 0.5);
}
.close {
    align-self: flex-start;
    margin-left: auto;
    width: 48px;
    height: 18px;
    background: none;
    border: 1px solid #8c949c;
    border-top: 0;
    border-radius: 0 0 5px 5px;
    color: #fff;
    font: bold 17px/14px "Liberation Sans", sans-serif;
}
.pane {
    flex: 1;
    min-height: 0;
    display: flex;
    flex-direction: column;
    background: #55cfb0;
    border: 1px solid #000;
    outline: 1px solid #9cb0b4;
}
.list-row {
    display: flex;
    gap: 4px;
}
.list {
    flex: 1;
    padding: 3px;
    border: 2px solid;
    border-color: #2a7a66 #a8ecd8 #a8ecd8 #2a7a66;
}
.list li {
    height: 15px;
    margin-bottom: 3px;
    line-height: 16px;
}
.list .sel {
    background: #000;
    color: #7fdcc8;
}
.vbar, .hbar {
    display: flex;
    flex: none;
    background: #86baba;
    border: 2px solid;
    border-color: #4d8785 #c9f3f0 #c9f3f0 #4d8785;
}
.vbar {
    flex-direction: column;
    width: 15px;
}
.hbar {
    height: 14px;
}
.vbar.teal, .hbar.teal {
    background: #46ad95;
    border-color: #2a7a66 #a8ecd8 #a8ecd8 #2a7a66;
}
.vbar svg {
    width: 11px;
    height: 12px;
}
.hbar svg {
    width: 12px;
    height: 10px;
}
.track {
    flex: 1;
    display: flex;
    min-height: 0;
}
.thumb {
    flex: 1;
    background: #9cdada;
    border: 2px solid;
    border-color: #c9f3f0 #4d8785 #4d8785 #c9f3f0;
}
.teal .thumb {
    background: #55cfb0;
    border-color: #a8ecd8 #2a7a66 #2a7a66 #a8ecd8;
}
.thumb.short {
    flex: 0 0 45px;
}
.thumb.mini {
    height: 20px;
}
.thumb.low {
    margin-top: 165px;
}
.tools {
    display: flex;
}
.tools button, .rv-foot button {
    width: 30px;
    height: 30px;
}

/* checklist editor */
.checklist {
    left: calc(100% - 398px);
    top: 80px;
    width: 396px;
    height: 724px;
    padding: 0 4px 4px 5px;
    background: linear-gradient(90deg, #777, #333 110px, #000 150px, #222);
}
.checklist .caption {
    height: 26px;
}
.ck-menu {
    height: 36px;
    background: #9cdada;
    border-bottom: 1px solid #000;
}
.ck-menu nav {
    display: flex;
    align-items: center;
    gap: 18px;
    height: 35px;
    width: 136px;
    padding-left: 11px;
    font: bold 14px/18px "Liberation Serif", serif;
    outline: 1px solid #000;
}
.ck-name {
    height: 20px;
    background: #9cdada;
    border-bottom: 1px solid #000;
    text-align: center;
    font: bold 14px/18px "Liberation Serif", serif;
}
.ck-body {
    flex: 1;
    min-height: 0;
    display: flex;
    gap: 8px;
    padding: 2px 2px 3px 0;
}
.ck-items {
    flex: 1;
    min-width: 0;
    padding: 0 2px 0 1px;
    display: flex;
    flex-direction: column;
    gap: 4px;
    border: 2px solid;
    border-color: #2a7a66 #a8ecd8 #a8ecd8 #2a7a66;
}
.check {
    height: 115px;
    flex: none;
    display: flex;
    flex-direction: column;
    background: #9cdada;
    border-right: 1px solid #000;
    border-bottom: 2px solid #000;
    font-weight: normal;
}
.r1 {
    display: flex;
    height: 29px;
    padding-right: 2px;
}
.r1 b {
    flex: 1;
    min-width: 0;
    overflow: hidden;
    padding: 6px 0 0 5px;
    font: bold 14px/18px "Liberation Serif", serif;
}
.r1 svg {
    margin: 3px 0 0 20px;
}
.r1 button {
    width: 43px;
    margin-left: 3px;
}
.r1 button:last-child {
    width: 30px;
    margin-left: 4px;
}
.r1 button svg {
    margin: 0;
}
.r1 input[type=text] {
    width: 105px;
    padding: 0 0 9px 5px;
    margin-left: 4px;
    background: #9cdada;
    border: 2px solid;
    border-color: #4d8785 #c9f3f0 #c9f3f0 #4d8785;
}
.r1 input[type=checkbox] {
    appearance: none;
    width: 13px;
    height: 13px;
    margin: 4px 0 0 3px;
    border: 2px solid;
    border-color: #4d8785 #c9f3f0 #c9f3f0 #4d8785;
}
.r1 input:checked::before {
    content: "✔";
    display: block;
    font: 12px/9px "DejaVu Sans", sans-serif;
    color: #c00050;
}
.r2 {
    display: flex;
    gap: 4px;
    height: 25px;
    margin: 3px 2px 3px 1px;
    font: bold 14px/18px "Liberation Serif", serif;
}
.r2 button {
    flex: 1;
}
.r3 {
    display: flex;
    gap: 4px;
    height: 33px;
    padding-left: 1px;
}
.r3 button {
    width: 30px;
    height: 31px;
}
.r3 p {
    flex: 1;
    width: 0;
    padding-right: 36px;
    text-align: center;
    line-height: 15px;
}
.r3 strong {
    width: 17px;
    margin-left: -4px;
    background: #ff1a1a;
    border: 1px solid #000;
    text-align: center;
    line-height: 30px;
    font-family: "Liberation Sans", sans-serif;
}
.r4 {
    flex: 1;
    padding-left: 3px;
    background: #ffffcc;
    border-top: 1px solid #000;
}
.ck-close {
    height: 32px;
    padding: 2px;
    background: #9cdada;
    border-top: 1px solid #000;
}
.ck-close button {
    width: 100%;
    height: 26px;
}

/* results histogram */
.histogram {
    left: calc(100% - 549px);
    top: 304px;
    width: 482px;
    height: 575px;
    padding-bottom: 5px;
    background: linear-gradient(90deg, #666, #333 130px, #000 150px, #d4e8fa 160px) top / 100% 30px no-repeat, linear-gradient(#d4e8fa 84%, #111 88%) right / 8px 100% no-repeat, #111;
}
.histogram .glow {
    background: none;
}
.histogram .close {
    color: #777;
}
.hg-top {
    display: flex;
    gap: 3px;
    height: 287px;
    margin: 4px 5px 0 4px;
}
.hg-left {
    width: 102px;
    display: flex;
    flex-direction: column;
    background: #9cdada;
    border: 1px solid #000;
}
.radios {
    height: 138px;
    border-bottom: 2px solid #000;
    padding: 1px 0 0 5px;
}
.radios label {
    display: flex;
    align-items: center;
    gap: 4px;
    height: 27px;
}
.radios input {
    appearance: none;
    width: 10px;
    height: 10px;
    margin: 0 2px;
    transform: rotate(45deg);
    border: 2px solid;
    border-color: #d8ffff #6a9c9c #6a9c9c #d8ffff;
}
.radios input:checked {
    background: #d00050;
    border-color: #5c8282 #e8ffff #e8ffff #5c8282;
}
.hg-left .list-row {
    height: 115px;
}
.histogram .list {
    border-color: #4d8785 #c9f3f0 #c9f3f0 #4d8785;
}
.histogram .sel {
    color: #c0f0f0;
}
.hg-left .tools {
    gap: 4px;
    padding: 1px 3px;
}
.hg-right {
    flex: 1;
    min-width: 0;
    display: flex;
    flex-direction: column;
    background: #9cdada;
    border: 2px solid #000;
    border-width: 3px 1px 3px 2px;
}
.chart {
    flex: 1;
    display: flex;
    flex-direction: column;
    align-items: center;
}
.chart-title {
    margin-top: 3px;
    height: 22px;
    padding: 0 3px;
    line-height: 22px;
    font-style: italic;
    background: #b3ffff;
    border: 1px solid #000;
    box-shadow: 2px 2px #789;
}
.bars {
    flex: 1;
    width: 100%;
    display: flex;
    align-items: flex-end;
    padding-left: 3px;
    border-bottom: 3px solid #000;
}
.bars div {
    width: 55px;
    text-align: center;
}
.bars i {
    display: block;
    margin-right: -1px;
    background: #ff1a1a;
    border: 1px solid #000;
    border-bottom: 0;
}
.bars span {
    display: block;
    line-height: 17px;
}
.hot {
    color: #d82020;
}
.bins {
    width: 100%;
    display: flex;
    padding: 2px 0 8px 3px;
}
.bins div {
    width: 55px;
    height: 29px;
    padding-left: 9px;
    line-height: 15px;
    background: #ff1a1a;
    border: 1px solid #000;
    border-right: 0;
}
.bins div:last-child {
    border-right: 1px solid #000;
}
.bins span {
    display: block;
    padding-left: 10px;
}
.hg-res {
    height: 63px;
    display: flex;
    border-top: 2px solid #000;
}
.hg-res .list {
    flex: none;
    width: 93px;
    padding-top: 2px;
    margin-right: 3px;
}
.resolution {
    flex: 1;
    display: flex;
    flex-direction: column;
    padding: 1px 2px;
    border-left: 2px solid #000;
}
.resolution label {
    text-align: center;
}
.resolution output {
    padding: 5px 0 0 4px;
}
.resolution input {
    appearance: none;
    height: 16px;
    width: 100%;
    background: #86baba;
    border: 2px solid;
    border-color: #4d8785 #c9f3f0 #c9f3f0 #4d8785;
}
.resolution input::-webkit-slider-thumb {
    appearance: none;
    width: 29px;
    height: 12px;
    background: linear-gradient(90deg, transparent 12px, #4d8785 12px, #c9f3f0 14px, transparent 14px), #9cdada;
    border: 2px solid;
    border-color: #c9f3f0 #4d8785 #4d8785 #c9f3f0;
}
.splitter {
    height: 9px;
    display: flex;
    align-items: center;
    justify-content: flex-end;
    padding-right: 9px;
    background: linear-gradient(transparent 3px, #2a7a66 3px, #a8ecd8 5px, transparent 5px);
}
.splitter i {
    width: 10px;
    height: 8px;
    background: #55cfb0;
    border: 2px solid;
    border-color: #a8ecd8 #2a7a66 #2a7a66 #a8ecd8;
}
.map {
    flex: 1;
    margin: 0 5px 0 4px;
    display: flex;
    align-items: center;
    justify-content: center;
    border: 2px solid;
    border-color: #1f5a4c #a8ecd8 #a8ecd8 #1f5a4c;
}
.hg-foot {
    display: flex;
    gap: 3px;
    height: 45px;
    padding: 2px 5px 4px;
}
.hg-foot button {
    width: 31px;
    height: 39px;
}
.hg-foot .big {
    width: 38px;
}
.message {
    flex: 1;
    background: #9cdada;
    border: 1px solid #000;
    padding-left: 3px;
    line-height: 38px;
}
.hg-close {
    height: 29px;
    padding: 2px;
    background: #9cdada;
    border-top: 1px solid #000;
}
.hg-close button {
    width: 100%;
    height: 24px;
}

/* results viewer */
.viewer {
    left: 10px;
    top: 637px;
    width: 510px;
    height: 403px;
    background: linear-gradient(90deg, #8a9298, #777 120px, #111 170px, #0a0c10 300px, #5a6068) top / 100% 30px no-repeat, #4c5870;
}
.rv-head {
    height: 29px;
    padding: 2px;
    background: #9cdada;
    border-bottom: 2px solid #000;
}
.rv-head div {
    height: 24px;
    text-align: center;
    font: bold 14px/18px "Liberation Serif", serif;
}
.rv-cols {
    flex: 1;
    min-height: 0;
    display: flex;
}
.rv-left {
    width: 171px;
    display: flex;
    flex-direction: column;
    border-right: 2px solid #000;
}
.tabs {
    display: flex;
    height: 30px;
    font-style: italic;
    border-bottom: 1px solid #000;
}
.tabs button {
    width: 46px;
    margin: 2px;
    font-weight: normal;
    font-style: italic;
}
.tabs button:last-child {
    width: 37px;
}
.tabs b {
    flex: 1;
    background: #9cdada;
    border: 2px solid #000;
    border-width: 0 2px;
    text-align: center;
    line-height: 28px;
}
.rv-left .list-row {
    flex: 1;
}
.rv-left .hbar {
    margin: 4px 19px 0 0;
}
.replace {
    height: 35px;
    padding: 3px 3px 2px 7px;
    border-top: 2px solid #000;
}
.replace button {
    width: 100%;
    height: 29px;
}
.rv-right {
    flex: 1;
    min-width: 0;
    display: flex;
    flex-direction: column;
    gap: 2px;
}
.cats {
    display: flex;
    height: 30px;
}
.cats > button {
    width: 208px;
    margin: 1px 0 0 1px;
    font-style: italic;
}
.cats div {
    flex: 1;
    display: flex;
    align-items: center;
    justify-content: space-between;
    background: #9cdada;
    padding: 2px 2px 0 0;
}
.cats .option {
    width: 60px;
    height: 27px;
}
.rv-right .list-row {
    height: 115px;
}
.rv-right .hbar {
    margin: 3px 19px 0 0;
}
.nav {
    display: flex;
    gap: 4px;
    padding: 0 3px 0 2px;
    height: 24px;
}
.nav button {
    width: 44px;
}
.nav button:first-child {
    width: 53px;
}
.nav input {
    flex: 1;
    min-width: 0;
    padding: 0 0 4px 5px;
    background: #55cfb0;
    border: 2px solid;
    border-color: #2a7a66 #a8ecd8 #a8ecd8 #2a7a66;
}
.nav label {
    line-height: 22px;
}
.zoomrow {
    display: flex;
    gap: 4px;
}
.zoombox {
    display: flex;
    align-items: center;
    width: 221px;
    height: 32px;
    border: 1px solid #000;
}
.zoombox > button {
    width: 118px;
    height: 28px;
    margin: 0 1px 0 5px;
}
.zoombox span {
    height: 30px;
    line-height: 30px;
    background: #9cdada;
    border-left: 1px solid #000;
}
.zoombox div {
    flex: 1;
    height: 30px;
    padding: 1px 2px 1px 6px;
    background: #1ee61e;
}
.zoombox .lime {
    width: 100%;
    height: 28px;
    justify-content: flex-end;
}
.zoomrow label {
    display: flex;
    align-items: center;
    gap: 4px;
    height: 26px;
}
.zoomrow input {
    appearance: none;
    width: 13px;
    height: 14px;
    border: 2px solid;
    border-color: #a8ecd8 #2a7a66 #2a7a66 #a8ecd8;
}
.rv-right .tools {
    justify-content: flex-end;
    gap: 4px;
    padding-right: 3px;
}
.rv-right .tools button:last-child {
    width: 35px;
}
.rv-info {
    height: 22px;
    border-top: 2px solid #000;
    text-align: center;
    line-height: 19px;
}
.rv-erf {
    height: 21px;
    padding-left: 2px;
    line-height: 19px;
    background: #ffffcc;
    border: 1px solid #000;
    border-width: 1px 0;
}
.rv-foot {
    display: flex;
    gap: 4px;
    height: 33px;
    padding: 2px 2px 1px;
    background: #9cdada;
}
.rv-foot .wide {
    flex: 1;
}
```
